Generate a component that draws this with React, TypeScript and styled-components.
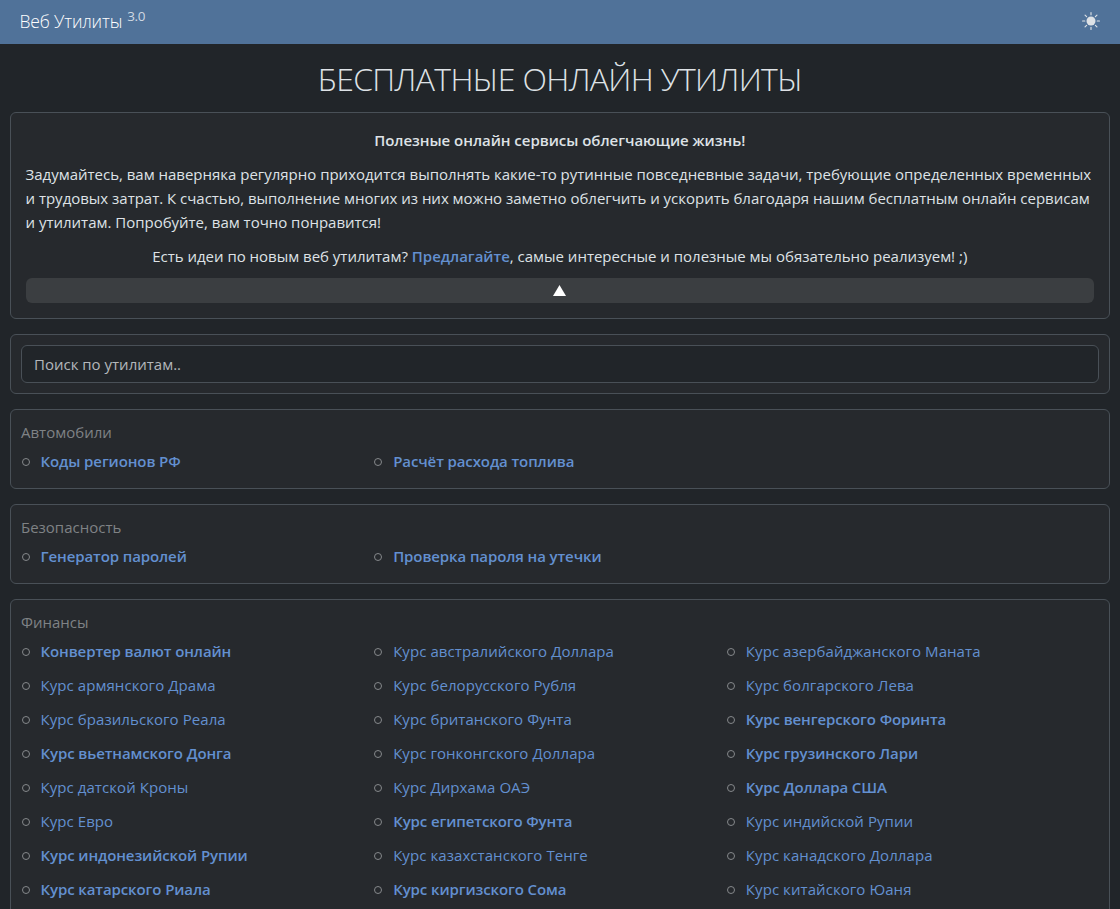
import React from "react";
import styled, { createGlobalStyle } from "styled-components";

const GlobalStyle = createGlobalStyle`
  *, *::before, *::after { box-sizing: border-box; }
  html, body { margin: 0; background: #212529; }
  body {
    font-family: "Open Sans", "Noto Sans", sans-serif;
    font-size: 15px;
    line-height: 24px;
    color: #dee2e6;
  }
`;

const Page = styled.div`
  height: 100vh;
  overflow: hidden;
`;

const TopBar = styled.header`
  display: flex;
  align-items: center;
  justify-content: space-between;
  height: 44px;
  padding: 0 20px;
  background: #507299;
  color: #fff;
`;

const Brand = styled.a`
  display: flex;
  align-items: flex-start;
  gap: 5px;
  margin: -2px 0 0 -0.5px;
  font-size: 17.5px;
  line-height: 26px;
  font-weight: 300;
  letter-spacing: -0.15px;
`;

const Version = styled.sup`
  font-size: 13.5px;
  line-height: 16px;
  letter-spacing: -0.3px;
  font-weight: 400;
  color: #cfd8e2;
`;

const ThemeButton = styled.button`
  display: flex;
  margin-top: -2px;
  padding: 0;
  border: 0;
  background: none;
  color: #dee2e6;
`;

const Title = styled.h1`
  margin: 0;
  height: 68px;
  padding-top: 11px;
  text-align: center;
  font-size: 32px;
  line-height: 48px;
  font-weight: 300;
  letter-spacing: -0.65px;
`;

const Content = styled.main`
  display: flex;
  flex-direction: column;
  gap: 15px;
  padding: 0 10px;
`;

const Card = styled.section<{ $pad: string }>`
  padding: ${(p) => p.$pad};
  border: 1px solid #495057;
  border-radius: 6px;
  background: #26292d;
`;

const Paragraph = styled.p<{ $center?: boolean; $strong?: boolean; $track?: number }>`
  margin: 0 0 10px -0.5px;
  white-space: nowrap;
  text-align: ${(p) => (p.$center ? "center" : "left")};
  font-weight: ${(p) => (p.$strong ? 600 : 400)};
  letter-spacing: ${(p) => p.$track ?? -0.012}px;
`;

const Link = styled.a<{ $strong?: boolean }>`
  color: #6390d0;
  font-weight: ${(p) => (p.$strong ? 600 : 400)};
`;

const CollapseButton = styled.button`
  display: flex;
  align-items: center;
  justify-content: center;
  width: 100%;
  height: 25px;
  padding: 0 1px 0 0;
  border: 0;
  border-radius: 6px;
  background: #3b3e41;
  color: #fff;
`;

const SearchInput = styled.input`
  display: block;
  width: 100%;
  height: 38px;
  padding: 0 12px 1px;
  border: 1px solid #495057;
  border-radius: 6px;
  background: #212529;
  color: #dee2e6;
  font: inherit;
  letter-spacing: 0;
  &::placeholder { color: #b3b7bb; opacity: 1; }
`;

const GroupTitle = styled.h2`
  margin: 0 0 5px;
  font-size: 15px;
  line-height: 25px;
  height: 24px;
  font-weight: 400;
  letter-spacing: 0;
  color: #7f8285;
`;

const LinkList = styled.ul`
  display: grid;
  grid-template-columns: repeat(3, 1fr);
  margin: 0;
  padding: 0 0 0 20px;
  list-style: none;
`;

const Item = styled.li<{ $strong?: boolean }>`
  display: flex;
  align-items: flex-start;
  gap: 11px;
  height: 24px;
  margin: 0 0 10px -19.5px;
  white-space: nowrap;
  letter-spacing: ${(p) => (p.$strong ? -0.1 : 0.07)}px;
  &::before {
    content: "";
    width: 8px;
    height: 8px;
    margin-top: 9px;
    border: 1px solid #85888b;
    border-radius: 50%;
  }
`;

type Entry = [label: string, strong?: boolean];

const groups: { title: string; items: Entry[] }[] = [
  { title: "Автомобили", items: [["Коды регионов РФ", true], ["Расчёт расхода топлива", true]] },
  { title: "Безопасность", items: [["Генератор паролей", true], ["Проверка пароля на утечки", true]] },
  {
    title: "Финансы",
    items: [
      ["Конвертер валют онлайн", true], ["Курс австралийского Доллара"], ["Курс азербайджанского Маната"],
      ["Курс армянского Драма"], ["Курс белорусского Рубля"], ["Курс болгарского Лева"],
      ["Курс бразильского Реала"], ["Курс британского Фунта"], ["Курс венгерского Форинта", true],
      ["Курс вьетнамского Донга", true], ["Курс гонконгского Доллара"], ["Курс грузинского Лари", true],
      ["Курс датской Кроны"], ["Курс Дирхама ОАЭ"], ["Курс Доллара США", true],
      ["Курс Евро"], ["Курс египетского Фунта", true], ["Курс индийской Рупии"],
      ["Курс индонезийской Рупии", true], ["Курс казахстанского Тенге"], ["Курс канадского Доллара"],
      ["Курс катарского Риала", true], ["Курс киргизского Сома", true], ["Курс китайского Юаня"],
    ],
  },
];

const SunIcon = () => (
  <svg width="18" height="18" viewBox="0 0 16 16" fill="currentColor">
    <circle cx="8" cy="8" r="4" />
    <path
      d="M8 .5v2M8 13.5v2M.5 8h2M13.5 8h2M2.7 2.7l1.4 1.4M11.9 11.9l1.4 1.4M2.7 13.3l1.4-1.4M11.9 4.1l1.4-1.4"
      stroke="currentColor"
      strokeWidth="1"
      strokeLinecap="round"
    />
  </svg>
);

export default function App() {
  return (
    <Page>
      <GlobalStyle />
      <TopBar>
        <Brand>
          Веб Утилиты <Version>3.0</Version>
        </Brand>
        <ThemeButton aria-label="Тема">
          <SunIcon />
        </ThemeButton>
      </TopBar>
      <Title>БЕСПЛАТНЫЕ ОНЛАЙН УТИЛИТЫ</Title>
      <Content>
        <Card $pad="15px">
          <Paragraph $center $strong $track={-0.03}>Полезные онлайн сервисы облегчающие жизнь!</Paragraph>
          <Paragraph>
            Задумайтесь, вам наверняка регулярно приходится выполнять какие-то рутинные повседневные задачи, требующие определенных временных
            <br />
            и трудовых затрат. К счастью, выполнение многих из них можно заметно облегчить и ускорить благодаря нашим бесплатным онлайн сервисам
            <br />
            и утилитам. Попробуйте, вам точно понравится!
          </Paragraph>
          <Paragraph $center>
            Есть идеи по новым веб утилитам? <Link $strong>Предлагайте</Link>, самые интересные и полезные мы обязательно реализуем! ;)
          </Paragraph>
          <CollapseButton aria-label="Свернуть">
            <svg width="13" height="11" viewBox="0 0 13 11">
              <path d="M6.5 0L13 11H0z" fill="currentColor" />
            </svg>
          </CollapseButton>
        </Card>
        <Card $pad="10px">
          <SearchInput placeholder="Поиск по утилитам.." />
        </Card>
        {groups.map((group) => (
          <Card key={group.title} $pad="10px 10px 5px">
            <GroupTitle>{group.title}</GroupTitle>
            <LinkList>
              {group.items.map(([label, strong]) => (
                <Item key={label} $strong={strong}>
                  <Link $strong={strong}>{label}</Link>
                </Item>
              ))}
            </LinkList>
          </Card>
        ))}
      </Content>
    </Page>
  );
}
